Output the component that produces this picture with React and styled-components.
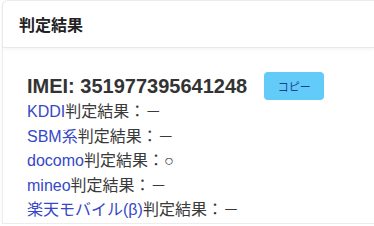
import React from 'react'
import styled, { createGlobalStyle } from 'styled-components'

const Global = createGlobalStyle`
body{
margin:0;
background:#fff;
font-family:"Liberation Sans","Noto Sans CJK JP",sans-serif;
color:#333;
overflow:hidden;
}
`
const Card = styled.div`
margin-left:2px;
border:1px solid #ececec;
border-right:none;
border-radius:6px 0 0 0;
background:#fff;
box-shadow:0 1px 3px rgba(0,0,0,0.05);
`
const Header = styled.div`
height:46px;
display:flex;
align-items:center;
padding:0 16px;
border-bottom:1px solid #e8e8e8;
box-shadow:0 2px 3px rgba(0,0,0,0.04);
`
const Title = styled.h2`
margin:0;
font-size:16px;
font-weight:bold;
color:#222;
`
const Body = styled.div`
padding:24px 24px 0;
`
const ImeiRow = styled.div`
display:flex;
align-items:center;
height:28px;
gap:17px;
`
const Imei = styled.span`
font-size:20px;
font-weight:bold;
color:#333;
`
const CopyButton = styled.button`
width:60px;
height:28px;
border:none;
border-radius:4px;
background:#63cbf8;
color:#1d3d8f;
font-size:11px;
font-family:"Noto Sans CJK JP",sans-serif;
padding:0;
cursor:pointer;
`
const Line = styled.div`
font-size:16px;
line-height:24.5px;
white-space:nowrap;
color:#3a3a3a;
`
const Carrier = styled.a`
color:#3548c8;
text-decoration:none;
`

const results = [
  { name: 'KDDI', value: '－' },
  { name: 'SBM系', value: '－' },
  { name: 'docomo', value: '○' },
  { name: 'mineo', value: '－' },
  { name: '楽天モバイル(β)', value: '－' },
]

export default function App() {
  return (
    <>
      <Global />
      <Card>
        <Header>
          <Title>判定結果</Title>
        </Header>
        <Body>
          <ImeiRow>
            <Imei>IMEI: 351977395641248</Imei>
            <CopyButton>コピー</CopyButton>
          </ImeiRow>
          {results.map((r) => (
            <Line key={r.name}>
              <Carrier href="#">{r.name}</Carrier>判定結果：{r.value}
            </Line>
          ))}
        </Body>
      </Card>
    </>
  )
}
